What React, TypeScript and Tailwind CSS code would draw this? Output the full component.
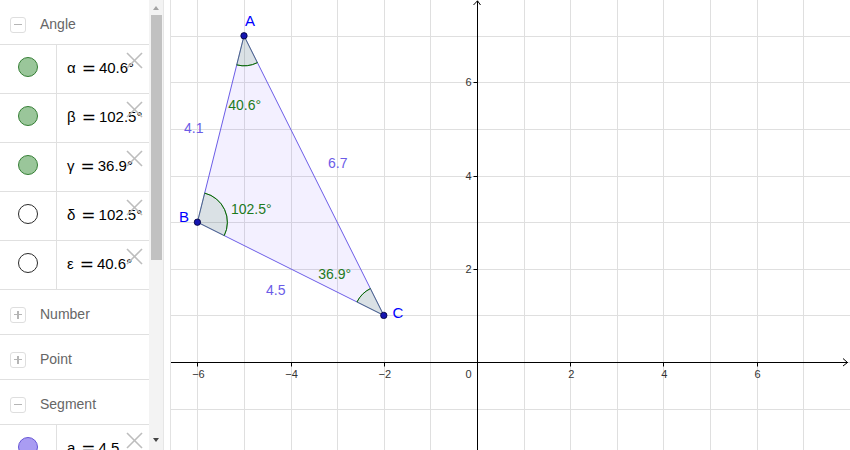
import React from "react";

const U = 46.6;
const OX = 477;
const OY = 362;
const X = (x: number) => OX + x * U;
const Y = (y: number) => OY - y * U;

type Pt = [number, number];
const A: Pt = [X(-5), Y(7)];
const B: Pt = [X(-6), Y(3)];
const C: Pt = [X(-2), Y(1)];

function toward(P: Pt, Q: Pt, r: number): Pt {
  const dx = Q[0] - P[0];
  const dy = Q[1] - P[1];
  const l = Math.hypot(dx, dy);
  return [P[0] + (dx / l) * r, P[1] + (dy / l) * r];
}

function sector(P: Pt, Q1: Pt, Q2: Pt, r: number, sweep: number) {
  const p1 = toward(P, Q1, r);
  const p2 = toward(P, Q2, r);
  const fill = `M${P[0]} ${P[1]} L${p1[0]} ${p1[1]} A${r} ${r} 0 0 ${sweep} ${p2[0]} ${p2[1]} Z`;
  const arc = `M${p1[0]} ${p1[1]} A${r} ${r} 0 0 ${sweep} ${p2[0]} ${p2[1]}`;
  return { fill, arc };
}

const FONT = "Liberation Sans, Arial, sans-serif";

function Graphics() {
  const vx: number[] = [];
  for (let k = -6; k <= 7; k++) vx.push(Math.round(X(k)) + 0.5);
  const hy: number[] = [];
  for (let k = -1; k <= 7; k++) hy.push(Math.round(Y(k)) + 0.5);
  const ax = Math.round(OX) + 0.5;
  const ay = Math.round(OY) + 0.5;

  const sA = sector(A, B, C, 30, 0);
  const sB = sector(B, A, C, 30, 1);
  const sC = sector(C, B, A, 30, 1);

  const xLabels = [-6, -4, -2, 2, 4, 6];
  const yLabels = [2, 4, 6];

  return (
    <svg width={679} height={450} viewBox="171 0 679 450" className="block">
      <rect x={171} y={0} width={679} height={450} fill="#ffffff" />
      <g stroke="#dfdfdf" strokeWidth={1} shapeRendering="crispEdges">
        {vx.map((x) => (
          <line key={"v" + x} x1={x} y1={0} x2={x} y2={450} />
        ))}
        {hy.map((y) => (
          <line key={"h" + y} x1={171} y1={y} x2={850} y2={y} />
        ))}
      </g>
      <g stroke="#000" strokeWidth={1.2} fill="none">
        <line x1={171} y1={ay} x2={848} y2={ay} shapeRendering="crispEdges" />
        <line x1={ax} y1={1} x2={ax} y2={450} shapeRendering="crispEdges" />
        <polyline points={`843,358.5 847.5,${ay} 843,366`} strokeWidth={1} />
        <polyline points={`473.5,5 ${ax},0.8 480.5,5`} strokeWidth={1} />
        {xLabels.map((v) => (
          <line key={"tx" + v} x1={Math.round(X(v)) + 0.5} y1={ay} x2={Math.round(X(v)) + 0.5} y2={ay + 4} strokeWidth={1} />
        ))}
        {yLabels.map((v) => (
          <line key={"ty" + v} x1={ax - 4} y1={Math.round(Y(v)) + 0.5} x2={ax} y2={Math.round(Y(v)) + 0.5} strokeWidth={1} />
        ))}
      </g>
      <g fontFamily={FONT} fontSize={11} fill="#333">
        {xLabels.map((v) => (
          <text key={"lx" + v} x={X(v) + 1} y={378} textAnchor="middle">
            {v < 0 ? "\u2212" + Math.abs(v) : String(v)}
          </text>
        ))}
        {yLabels.map((v) => (
          <text key={"ly" + v} x={471.5} y={Y(v) + 4} textAnchor="end">
            {v}
          </text>
        ))}
        <text x={471.5} y={378} textAnchor="end">0</text>
      </g>
      <polygon
        points={`${A[0]},${A[1]} ${B[0]},${B[1]} ${C[0]},${C[1]}`}
        fill="rgba(124,92,255,0.09)"
        stroke="#6b5ce7"
        strokeWidth={1}
      />
      {[sA, sB, sC].map((s, i) => (
        <g key={"s" + i}>
          <path d={s.fill} fill="rgba(0,100,0,0.1)" stroke="none" />
          <path d={s.fill} fill="none" stroke="#2b6e2b" strokeWidth={0.8} strokeOpacity={0.6} />
          <path d={s.arc} fill="none" stroke="#006400" strokeWidth={1} />
        </g>
      ))}
      <g fontFamily={FONT} fontSize={14} fill="#6b5ce7">
        <text x={184} y={133.3}>4.1</text>
        <text x={328} y={167.5}>6.7</text>
        <text x={266} y={295}>4.5</text>
      </g>
      <g fontFamily={FONT} fontSize={14} fill="#1d7a1d">
        <text x={228.3} y={110}>40.6°</text>
        <text x={231} y={214.3}>102.5°</text>
        <text x={318.3} y={279}>36.9°</text>
      </g>
      {[A, B, C].map((p, i) => (
        <circle key={"p" + i} cx={p[0]} cy={p[1]} r={3.2} fill="#1515b0" stroke="#000033" strokeWidth={0.8} />
      ))}
      <g fontFamily={FONT} fontSize={15} fill="#0000ff">
        <text x={245} y={26}>A</text>
        <text x={179} y={222.3}>B</text>
        <text x={392.5} y={318.3}>C</text>
      </g>
    </svg>
  );
}

function XIcon() {
  return (
    <svg width={17} height={17} viewBox="0 0 17 17" className="absolute left-[126px] top-[7px]">
      <line x1={1} y1={1} x2={16} y2={16} stroke="#bdbdbd" strokeWidth={1.6} />
      <line x1={16} y1={1} x2={1} y2={16} stroke="#bdbdbd" strokeWidth={1.6} />
    </svg>
  );
}

function Header({ label, open }: { label: string; open: boolean }) {
  return (
    <div className="h-[45px] shrink-0 flex items-center border-b border-[#e0e0e0] pl-[10px] pt-[5px]">
      <div className="w-[16px] h-[16px] rounded-[3px] border border-[#dedede] flex items-center justify-center relative">
        <div className="w-[8px] h-[1.5px] bg-[#b5b5b5]" />
        {!open && <div className="absolute w-[1.5px] h-[8px] bg-[#b5b5b5]" />}
      </div>
      <span className="ml-[14px] text-[14px] text-[#666666]">{label}</span>
    </div>
  );
}

type Item = { sym: string; val: string; kind: "green" | "empty" | "purple" };

function Row({ item }: { item: Item }) {
  const circle =
    item.kind === "green"
      ? "bg-[#9ac69a] border-[#357f35]"
      : item.kind === "purple"
      ? "bg-[#a99cf2] border-[#6655d6]"
      : "bg-white border-[#2a2a2a]";
  return (
    <div className="relative h-[49px] shrink-0 flex border-b border-[#e0e0e0]">
      <div className="w-[57px] border-r border-[#e0e0e0] flex items-center justify-center pb-[4px]">
        <div className={`w-[20px] h-[20px] rounded-full border ${circle}`} />
      </div>
      <div className="flex items-center pl-[10px] pb-[1px] text-[15px] text-black whitespace-nowrap">
        <span>{item.sym}</span>
        <span className="ml-[6px] mr-[3px] text-[17px] leading-none font-['DejaVu_Sans',sans-serif]">=</span>
        <span>{item.val}</span>
      </div>
      <XIcon />
    </div>
  );
}

export default function App() {
  const angles: Item[] = [
    { sym: "α", val: "40.6°", kind: "green" },
    { sym: "β", val: "102.5°", kind: "green" },
    { sym: "γ", val: "36.9°", kind: "green" },
    { sym: "δ", val: "102.5°", kind: "empty" },
    { sym: "ε", val: "40.6°", kind: "empty" },
  ];
  return (
    <div className="w-[850px] h-[450px] flex overflow-hidden bg-white font-['Liberation_Sans',Arial,sans-serif]">
      <div className="w-[149px] h-[450px] overflow-hidden flex flex-col shrink-0">
        <Header label="Angle" open />
        {angles.map((a) => (
          <Row key={a.sym} item={a} />
        ))}
        <Header label="Number" open={false} />
        <Header label="Point" open={false} />
        <Header label="Segment" open />
        <Row item={{ sym: "a", val: "4.5", kind: "purple" }} />
      </div>
      <div className="w-[15px] h-[450px] bg-[#f3f3f3] border-r border-[#e6e6e6] flex flex-col shrink-0">
        <div className="h-[15px] shrink-0 flex items-center justify-center">
          <div className="w-0 h-0 border-l-[3.5px] border-r-[3.5px] border-b-[4px] border-l-transparent border-r-transparent border-b-[#a3a3a3]" />
        </div>
        <div className="ml-[2px] w-[11px] h-[245px] shrink-0 bg-[#c1c1c1]" />
        <div className="flex-1" />
        <div className="h-[15px] shrink-0 flex items-start justify-center pt-[3px] pr-[1px]">
          <div className="w-0 h-0 border-l-[3.5px] border-r-[3.5px] border-t-[4px] border-l-transparent border-r-transparent border-t-[#444]" />
        </div>
      </div>
      <div className="w-[7px] h-[450px] bg-white border-r border-[#e2e2e2] shrink-0" />
      <div className="flex-1 h-[450px] overflow-hidden">
        <Graphics />
      </div>
    </div>
  );
}
